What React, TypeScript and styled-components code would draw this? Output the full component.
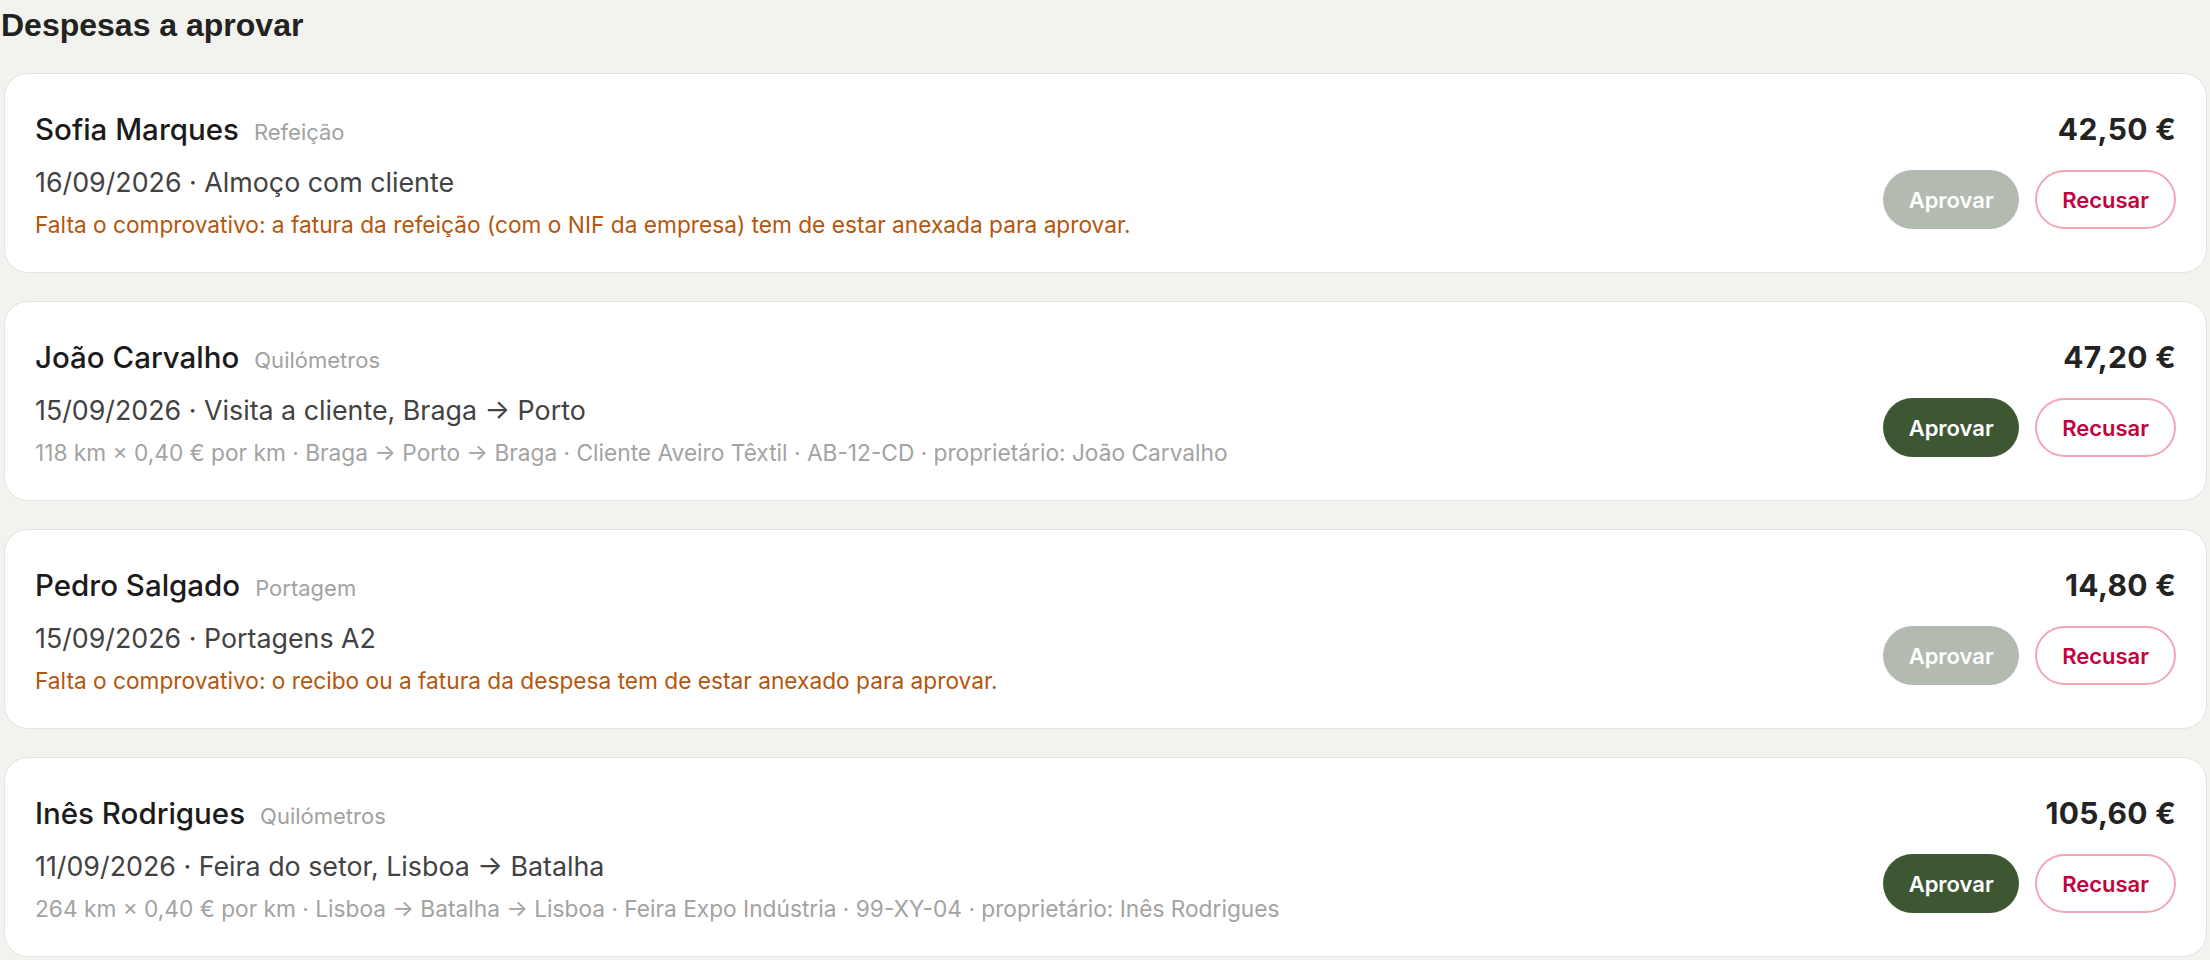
import React from "react";
import styled, { createGlobalStyle } from "styled-components";

const GlobalStyle = createGlobalStyle`
  html, body {
    margin: 0;
    padding: 0;
    background: #f2f2ee;
  }
  body {
    font-family: Inter, Roboto, "Noto Sans", Arial, sans-serif;
    -webkit-font-smoothing: antialiased;
  }
  * { box-sizing: border-box; }
`;

const Page = styled.main`
  padding: 7px 3px 0 1px;
`;

const Heading = styled.h1`
  margin: 0 0 30px 0;
  font-family: "Liberation Sans", Arial, sans-serif;
  font-weight: 700;
  font-size: 32px;
  line-height: 36px;
  color: #222220;
`;

const List = styled.div`
  display: flex;
  flex-direction: column;
  gap: 28px;
  padding-left: 3px;
`;

const Card = styled.article`
  display: flex;
  justify-content: space-between;
  align-items: flex-start;
  background: #ffffff;
  border: 1px solid #e3e3df;
  border-radius: 24px;
  padding: 36px 30px 32px 30px;
`;

const Info = styled.div`
  display: flex;
  flex-direction: column;
  min-width: 0;
`;

const TitleRow = styled.div`
  display: flex;
  align-items: baseline;
  gap: 15px;
  height: 39px;
  margin-bottom: 15px;
`;

const Name = styled.span`
  font-size: 29.5px;
  line-height: 39px;
  font-weight: 500;
  color: #1b1b1b;
`;

const Category = styled.span`
  font-size: 22px;
  line-height: 39px;
  font-weight: 400;
  color: #a2a2a2;
`;

const Summary = styled.div`
  font-size: 26.8px;
  line-height: 36px;
  color: #424242;
  margin-bottom: 9px;
`;

const Note = styled.div<{ $tone: "warn" | "muted" }>`
  font-size: 22.7px;
  line-height: 31px;
  color: ${(p) => (p.$tone === "warn" ? "#b5560c" : "#a3a3a3")};
  white-space: nowrap;
`;

const Side = styled.div`
  display: flex;
  flex-direction: column;
  align-items: flex-end;
  gap: 21px;
`;

const Amount = styled.div`
  font-family: Inter, "Liberation Sans", sans-serif;
  font-weight: 700;
  font-size: 30px;
  line-height: 39px;
  color: #232323;
  letter-spacing: 0.3px;
`;

const Actions = styled.div`
  display: flex;
  gap: 16px;
`;

const Button = styled.button`
  height: 59px;
  border-radius: 30px;
  font-family: Inter, Roboto, sans-serif;
  font-weight: 600;
  font-size: 22px;
  padding: 0 25px;
  cursor: pointer;
`;

const ApproveButton = styled(Button)<{ $enabled: boolean }>`
  border: none;
  min-width: 136px;
  color: #ffffff;
  background: ${(p) => (p.$enabled ? "#3d5733" : "#b3bbb1")};
`;

const RejectButton = styled(Button)`
  min-width: 140px;
  background: #ffffff;
  border: 2px solid #f3a6b3;
  color: #c0043f;
`;

type Expense = {
  name: string;
  category: string;
  summary: string;
  note: string;
  warn: boolean;
  amount: string;
};

const expenses: Expense[] = [
  {
    name: "Sofia Marques",
    category: "Refeição",
    summary: "16/09/2026 · Almoço com cliente",
    note: "Falta o comprovativo: a fatura da refeição (com o NIF da empresa) tem de estar anexada para aprovar.",
    warn: true,
    amount: "42,50 €",
  },
  {
    name: "João Carvalho",
    category: "Quilómetros",
    summary: "15/09/2026 · Visita a cliente, Braga → Porto",
    note: "118 km × 0,40 € por km · Braga → Porto → Braga · Cliente Aveiro Têxtil · AB-12-CD · proprietário: João Carvalho",
    warn: false,
    amount: "47,20 €",
  },
  {
    name: "Pedro Salgado",
    category: "Portagem",
    summary: "15/09/2026 · Portagens A2",
    note: "Falta o comprovativo: o recibo ou a fatura da despesa tem de estar anexado para aprovar.",
    warn: true,
    amount: "14,80 €",
  },
  {
    name: "Inês Rodrigues",
    category: "Quilómetros",
    summary: "11/09/2026 · Feira do setor, Lisboa → Batalha",
    note: "264 km × 0,40 € por km · Lisboa → Batalha → Lisboa · Feira Expo Indústria · 99-XY-04 · proprietário: Inês Rodrigues",
    warn: false,
    amount: "105,60 €",
  },
];

export default function App() {
  return (
    <>
      <GlobalStyle />
      <Page>
        <Heading>Despesas a aprovar</Heading>
        <List>
          {expenses.map((e) => (
            <Card key={e.name}>
              <Info>
                <TitleRow>
                  <Name>{e.name}</Name>
                  <Category>{e.category}</Category>
                </TitleRow>
                <Summary>{e.summary}</Summary>
                <Note $tone={e.warn ? "warn" : "muted"}>{e.note}</Note>
              </Info>
              <Side>
                <Amount>{e.amount}</Amount>
                <Actions>
                  <ApproveButton $enabled={!e.warn} disabled={e.warn}>
                    Aprovar
                  </ApproveButton>
                  <RejectButton>Recusar</RejectButton>
                </Actions>
              </Side>
            </Card>
          ))}
        </List>
      </Page>
    </>
  );
}
